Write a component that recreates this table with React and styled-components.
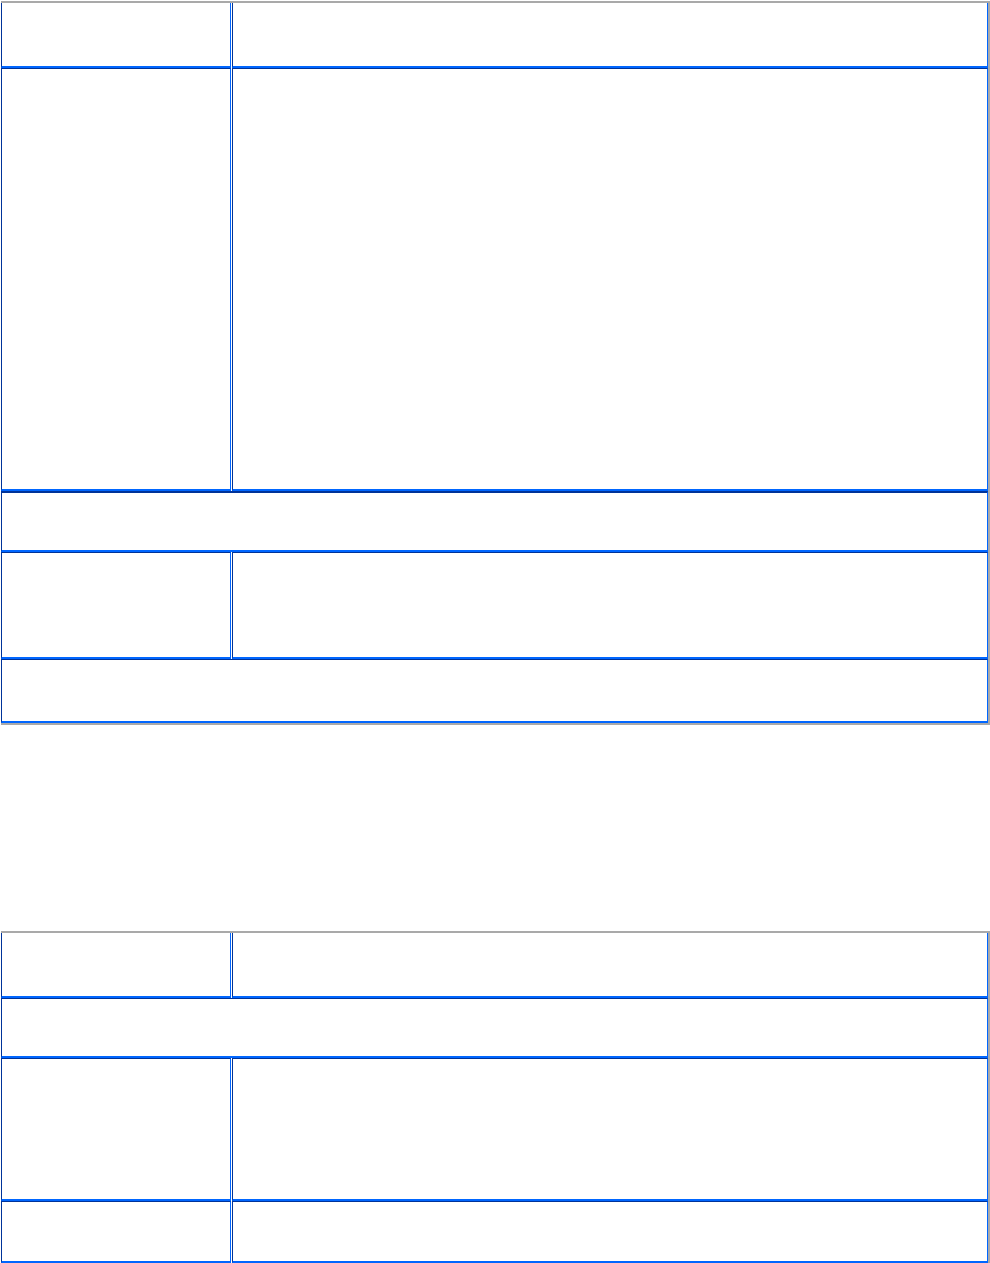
import styled, { createGlobalStyle } from "styled-components";

const GlobalStyle = createGlobalStyle`
    html, body {
        margin: 0;
        padding: 0;
        background: #ffffff;
        font-family: "Liberation Serif", serif;
    }
`;

const Page = styled.div`
    padding: 1px 0 0 1px;
    display: flex;
    flex-direction: column;
    gap: 206px;
`;

const Table = styled.div`
    display: grid;
    grid-template-columns: 230px 1fr;
    grid-template-rows: ${({ rows }) => rows};
    column-gap: 1px;
    width: 989px;
    box-sizing: border-box;
    border-top: 2px solid #a9a9a9;
    border-right: 2px solid #a9a9a9;
    border-bottom: 2px solid #a9a9a9;
    background: #ffffff;
`;

const Cell = styled.div`
    box-sizing: border-box;
    grid-column: ${({ wide }) => (wide ? "1 / span 2" : "auto")};
    border-left: 1px solid #003399;
    border-right: 1px solid #0066ff;
    border-top: ${({ first, top }) =>
        first ? "none" : top === "dark" ? "2px solid #003399" : "1px solid #003399"};
    border-bottom: 2px solid #0066ff;
    padding: 4px 6px;
`;

const Row = ({ cells, first }) =>
    cells === 1 ? (
        <Cell wide first={first} />
    ) : (
        <>
            <Cell first={first} />
            <Cell first={first} />
        </>
    );

export default function App() {
    return (
        <>
            <GlobalStyle />
            <Page>
                <Table rows="65px 423px 61px 107px 64px">
                    <Row cells={2} first />
                    <Row cells={2} />
                    <Cell wide top="dark" />
                    <Row cells={2} />
                    <Row cells={1} />
                </Table>
                <Table rows="65px 60px 143px 62px">
                    <Row cells={2} first />
                    <Row cells={1} />
                    <Row cells={2} />
                    <Row cells={2} />
                </Table>
            </Page>
        </>
    );
}
